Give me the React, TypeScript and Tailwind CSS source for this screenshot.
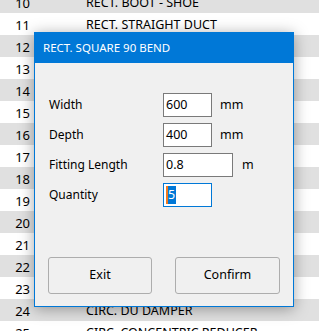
import React from 'react';

const rows = [
  { n: 10, name: 'RECT. BOOT - SHOE' },
  { n: 11, name: 'RECT. STRAIGHT DUCT' },
  { n: 12, name: '' },
  { n: 13, name: '' },
  { n: 14, name: '' },
  { n: 15, name: '' },
  { n: 16, name: '' },
  { n: 17, name: '' },
  { n: 18, name: '' },
  { n: 19, name: '' },
  { n: 20, name: '' },
  { n: 21, name: '' },
  { n: 22, name: '' },
  { n: 23, name: '' },
  { n: 24, name: 'CIRC. DU DAMPER' },
  { n: 25, name: 'CIRC. CONCENTRIC REDUCER' },
];

const font = { fontFamily: '"Noto Sans", "Open Sans", sans-serif' };

const Field: React.FC<{ label: string; value: string; unit?: string; wide?: boolean; focused?: boolean }> = ({
  label,
  value,
  unit,
  wide,
  focused,
}) => (
  <div className="flex items-center h-[24px]">
    <span className="w-[114px] text-[12px] text-black">{label}</span>
    <div
      className={`h-[24px] bg-white flex items-center pl-[2px] text-[12.5px] text-black border ${
        wide ? 'w-[70px]' : 'w-[49px]'
      } ${focused ? 'border-[#0078d7]' : 'border-[#7a7a7a]'}`}
    >
      {focused ? (
        <span className="bg-[#0078d7] text-white border-l-2 border-[#f07a20] leading-[18px] pr-[1px]">{value}</span>
      ) : (
        <span>{value}</span>
      )}
    </div>
    {unit && <span className={`text-[12.5px] text-black ${wide ? 'ml-[9px]' : 'ml-[8px]'}`}>{unit}</span>}
  </div>
);

const App: React.FC = () => {
  return (
    <div className="relative w-[319px] h-[331px] overflow-hidden bg-white" style={font}>
      {/* background list */}
      <div className="-mt-[9px]">
        {rows.map((r) => (
          <div
            key={r.n}
            className={`flex items-center h-[22px] pt-[3px] text-[12.5px] text-black ${r.n % 2 === 0 ? 'bg-[#e0e0e0]' : 'bg-white'}`}
          >
            <span className="w-[30px] text-right text-[13px]">{r.n}</span>
            <span className="pl-[56px] whitespace-nowrap">{r.name}</span>
          </div>
        ))}
      </div>

      {/* dialog */}
      <div className="absolute left-[34px] top-[32px] w-[260px] h-[275px] flex flex-col bg-[#f0f0f0] border border-[#0078d7] shadow-[0_2px_14px_rgba(0,0,0,0.35)]">
        <div className="h-[30px] bg-[#0078d7] flex items-center pl-[8px] text-white text-[11.5px]">
          RECT. SQUARE 90 BEND
        </div>
        <div className="flex flex-col gap-[6px] pl-[14px] pt-[30px]">
          <Field label="Width" value="600" unit="mm" />
          <Field label="Depth" value="400" unit="mm" />
          <Field label="Fitting Length" value="0.8" unit="m" wide />
          <Field label="Quantity" value="5" focused />
        </div>
        <div className="flex justify-between pl-[13px] pr-[13px] mt-auto mb-[12px]">
          <button className="w-[104px] h-[37px] rounded-[3px] border border-[#adadad] bg-[#f0f0f0] text-[12.5px] text-black">
            Exit
          </button>
          <button className="w-[105px] h-[37px] rounded-[3px] border border-[#adadad] bg-[#f0f0f0] text-[12.5px] text-black">
            Confirm
          </button>
        </div>
      </div>
    </div>
  );
};

export default App;
